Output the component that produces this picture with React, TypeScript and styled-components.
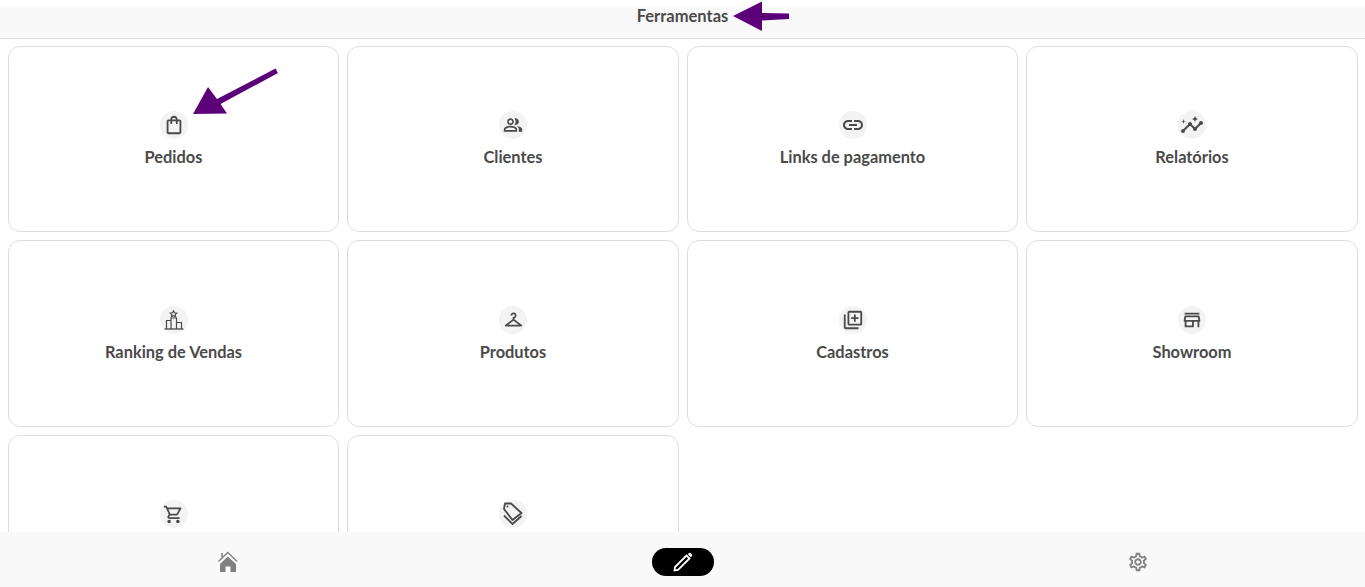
import React from 'react';
import styled, { createGlobalStyle } from 'styled-components';
import {
  MdOutlineShoppingBag,
  MdOutlinePeopleAlt,
  MdOutlineLink,
  MdInsights,
  MdOutlineCheckroom,
  MdOutlineLibraryAdd,
  MdOutlineStore,
  MdOutlineShoppingCart,
  MdOutlineSettings,
} from 'react-icons/md';

const GlobalStyle = createGlobalStyle`
  html, body {
    margin: 0;
    padding: 0;
    height: 100%;
    overflow: hidden;
    background: #fff;
    font-family: "Lato", "Liberation Sans", sans-serif;
  }
`;

const Page = styled.div`
  position: relative;
  height: 100vh;
  display: flex;
  flex-direction: column;
  padding-top: 7px;
  box-sizing: border-box;
  overflow: hidden;
`;

const Header = styled.header`
  flex: none;
  height: 32px;
  box-sizing: border-box;
  background: #f9f9f9;
  border-bottom: 1px solid #d8d8d8;
  display: flex;
  align-items: center;
  justify-content: center;
  padding-bottom: 13px;
  font-size: 16.5px;
  font-weight: 700;
  color: #4a4a4a;
`;

const Content = styled.main`
  flex: 1;
  min-height: 0;
  overflow: hidden;
`;

const Grid = styled.div`
  display: grid;
  grid-template-columns: repeat(4, 1fr);
  grid-auto-rows: 186.5px;
  gap: 8px;
  padding: 6.75px 7.25px 8px 7.75px;
`;

const Card = styled.div`
  box-sizing: border-box;
  background: #fff;
  border: 1px solid #dedede;
  border-radius: 12px;
  display: flex;
  flex-direction: column;
  align-items: center;
  justify-content: center;
  gap: 8px;
`;

const IconCircle = styled.div`
  width: 28px;
  height: 28px;
  border-radius: 50%;
  background: #f3f3f3;
  color: #4a4a4a;
  display: flex;
  align-items: center;
  justify-content: center;
`;

const Label = styled.span`
  min-height: 20px;
  font-size: 16.4px;
  line-height: 20px;
  font-weight: 700;
  color: #4a4a4a;
`;

const BottomNav = styled.nav`
  flex: none;
  height: 55px;
  box-sizing: border-box;
  padding-top: 5px;
  background: #f9f9f9;
  display: grid;
  grid-template-columns: repeat(3, 1fr);
  align-items: center;
  justify-items: center;
`;

const NavIcon = styled.div`
  display: flex;
  color: #808080;
`;

const ActivePill = styled.div`
  width: 62px;
  height: 28px;
  border-radius: 14px;
  background: #000;
  color: #fff;
  display: flex;
  align-items: center;
  justify-content: center;
`;

const Arrow = styled.svg<{ $left: number; $top: number }>`
  position: absolute;
  left: ${props => props.$left}px;
  top: ${props => props.$top}px;
  overflow: visible;
`;

const RankingIcon = () => (
  <svg width="20" height="20" viewBox="0 0 20 20" fill="none" stroke="currentColor" strokeWidth="1.2">
    <path d="M0.5 19h19" strokeWidth="1.3" />
    <path d="M2.5 19v-8.5h4.5V19M7 19V8h5.5v11M12.5 19v-6.5H17.5V19" />
    <path d="M9.5 0.8l1 2 2.2.3-1.5 1.5.4 2.1-2.1-1-2 1 .4-2.1-1.6-1.5 2.2-.3z" />
  </svg>
);

const TagsIcon = () => (
  <svg width="24" height="24" viewBox="0 0 24 24" fill="none" stroke="currentColor" strokeWidth="1.8" strokeLinejoin="round">
    <path d="M4 1.5h6l10.5 9.5-9 7L3 7z" />
    <path d="M3 13.5l8.5 8.5 9-8" />
    <circle cx="6.5" cy="4.5" r="1" fill="currentColor" stroke="none" />
  </svg>
);

const HomeIcon = () => (
  <svg width="24" height="24" viewBox="0 0 24 24" fill="currentColor">
    <path d="M2.5 11.5L11.7 2.5L21.2 11.5" fill="none" stroke="currentColor" strokeWidth="1.3" />
    <path d="M6 3v4.5" fill="none" stroke="currentColor" strokeWidth="1.5" />
    <path d="M4 14L11.7 6.5L20 14V22H14.5V16.5H9.5V22H4Z" />
  </svg>
);

const PencilIcon = () => (
  <svg width="22" height="22" viewBox="0 0 22 22" fill="none" stroke="currentColor" strokeWidth="1.8">
    <path d="M2.5 19.5L3 16L14.5 4.5L17.5 7.5L6 19Z" />
    <path d="M15.8 3.2L17 2Q17.8 1.4 18.6 2L20 3.4Q20.6 4.2 20 5L18.8 6.2Z" fill="currentColor" stroke="none" />
  </svg>
);

// os dois ultimos cards ficam cortados pela barra inferior, sem rotulo visivel
const tools: Array<[string, React.ReactNode, string]> = [
  ['pedidos', <MdOutlineShoppingBag size={22} />, 'Pedidos'],
  ['clientes', <MdOutlinePeopleAlt size={20} />, 'Clientes'],
  ['links', <MdOutlineLink size={24} />, 'Links de pagamento'],
  ['relatorios', <MdInsights size={24} />, 'Relatórios'],
  ['ranking', <RankingIcon />, 'Ranking de Vendas'],
  ['produtos', <MdOutlineCheckroom size={21} />, 'Produtos'],
  ['cadastros', <MdOutlineLibraryAdd size={22} />, 'Cadastros'],
  ['showroom', <MdOutlineStore size={22} />, 'Showroom'],
  ['carrinho', <MdOutlineShoppingCart size={21} />, ''],
  ['etiquetas', <TagsIcon />, ''],
];

export default function App() {
  return (
    <Page>
      <GlobalStyle />
      <Header>Ferramentas</Header>
      <Content>
        <Grid>
          {tools.map(([id, icon, label]) => (
            <Card key={id}>
              <IconCircle>{icon}</IconCircle>
              <Label>{label}</Label>
            </Card>
          ))}
        </Grid>
      </Content>
      <BottomNav>
        <NavIcon>
          <HomeIcon />
        </NavIcon>
        <ActivePill>
          <PencilIcon />
        </ActivePill>
        <NavIcon>
          <MdOutlineSettings size={22} />
        </NavIcon>
      </BottomNav>
      <Arrow $left={733} $top={1} width="57" height="30" viewBox="0 0 57 30">
        <path d="M0 15L29 0.5L29 12L56 12.5L56 18L29 19.5L29 30Z" fill="#5c007a" />
      </Arrow>
      <Arrow $left={193} $top={68} width="86" height="46" viewBox="0 0 86 46">
        <path d="M0 46L15 19L24 31L82.5 0.5L85 5L27.5 36L34 45.5Z" fill="#5c007a" />
      </Arrow>
    </Page>
  );
}
